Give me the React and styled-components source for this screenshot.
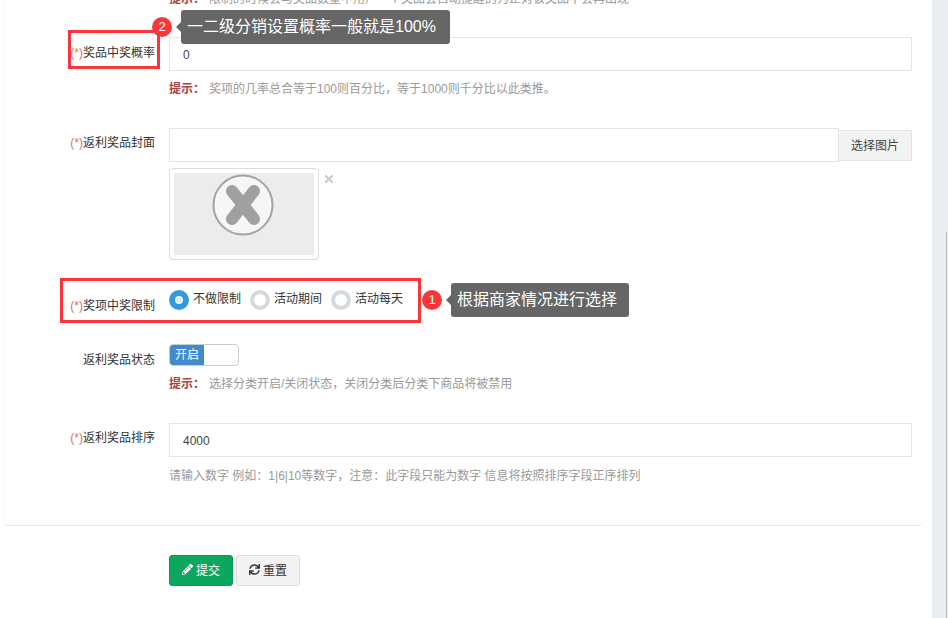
import React from "react";
import styled, { createGlobalStyle } from "styled-components";
import { FaPencilAlt, FaSync, FaTimes } from "react-icons/fa";

const GlobalStyle = createGlobalStyle`
    html, body {
        margin: 0;
        padding: 0;
        height: 618px;
        overflow: hidden;
        background: #ffffff;
        font-family: "Liberation Sans", "Noto Sans CJK SC", sans-serif;
        font-size: 12px;
        color: #333333;
    }
    * {
        box-sizing: border-box;
    }
`;

const App = () => {
    return (
        <>
            <GlobalStyle />
            <Page>
                <Main>
                    <Portlet>
                        <ClippedRow>
                            <Spacer />
                            <Hint>
                                <HintTitle>提示：</HintTitle>
                                限制的时候会与奖品数量中用户一个奖品会自动提醒的为止对该奖品不会再出现
                            </Hint>
                        </ClippedRow>

                        <Row $mb={29}>
                            <Label $pt={6}><Required>(*)</Required>奖品中奖概率</Label>
                            <Control>
                                <TextInput defaultValue="0" />
                                <Hint $mt={8}>
                                    <HintTitle>提示：</HintTitle>
                                    奖项的几率总合等于100则百分比，等于1000则千分比以此类推。
                                </Hint>
                            </Control>
                        </Row>

                        <Row $mb={23}>
                            <Label $pt={5}><Required>(*)</Required>返利奖品封面</Label>
                            <Control>
                                <InputGroup>
                                    <TextInput />
                                    <AddonButton>选择图片</AddonButton>
                                </InputGroup>
                                <ThumbRow>
                                    <Thumb>
                                        <ThumbImage>
                                            <svg width="64" height="62" viewBox="0 0 64 62">
                                                <circle cx="31" cy="31" r="29.5" fill="#f6f6f6" stroke="#a3a3a3" strokeWidth="2" />
                                                <path d="M20 17 L42 45 M42 17 L20 45" stroke="#a0a0a0" strokeWidth="12" strokeLinecap="round" />
                                            </svg>
                                        </ThumbImage>
                                    </Thumb>
                                    <RemoveIcon><FaTimes size={12} /></RemoveIcon>
                                </ThumbRow>
                            </Control>
                        </Row>

                        <Row $mb={27}>
                            <Label $pt={13}><Required>(*)</Required>奖项中奖限制</Label>
                            <RadioGroup>
                                <RadioItem>
                                    <RadioMark $checked />
                                    <RadioText>不做限制</RadioText>
                                </RadioItem>
                                <RadioItem>
                                    <RadioMark />
                                    <RadioText>活动期间</RadioText>
                                </RadioItem>
                                <RadioItem>
                                    <RadioMark />
                                    <RadioText>活动每天</RadioText>
                                </RadioItem>
                            </RadioGroup>
                        </Row>

                        <Row $mb={29}>
                            <Label $pt={6}>返利奖品状态</Label>
                            <Control>
                                <Switch>
                                    <SwitchOn>开启</SwitchOn>
                                </Switch>
                                <Hint $mt={8}>
                                    <HintTitle>提示：</HintTitle>
                                    选择分类开启/关闭状态，关闭分类后分类下商品将被禁用
                                </Hint>
                            </Control>
                        </Row>

                        <Row $mb={39}>
                            <Label $pt={5}><Required>(*)</Required>返利奖品排序</Label>
                            <Control>
                                <TextInput defaultValue="4000" />
                                <Hint $mt={9}>请输入数字 例如：1|6|10等数字，注意：此字段只能为数字 信息将按照排序字段正序排列</Hint>
                            </Control>
                        </Row>
                    </Portlet>

                    <Actions>
                        <SubmitButton><FaPencilAlt size={11} />提交</SubmitButton>
                        <ResetButton><FaSync size={11} />重置</ResetButton>
                    </Actions>
                </Main>
                <Rail>
                    <RailThumb />
                </Rail>

                <RedBox $left={68} $top={30} $width={92} $height={39} />
                <Badge $left={152} $top={17}>2</Badge>
                <Callout $left={181} $top={10} $width={269}>一二级分销设置概率一般就是100%</Callout>

                <RedBox $left={60} $top={278} $width={361} $height={45} />
                <Badge $left={422} $top={290}>1</Badge>
                <Callout $left={451} $top={283} $width={178}>根据商家情况进行选择</Callout>
            </Page>
        </>
    );
};

export default App;

const Page = styled.div`
    position: relative;
    display: flex;
    width: 948px;
    height: 618px;
    overflow: hidden;
`;
const Main = styled.div`
    flex: 1;
    padding-left: 4px;
`;
const Rail = styled.div`
    display: flex;
    justify-content: flex-end;
    align-items: flex-end;
    width: 16px;
    background-color: #eaedf2;
`;
const RailThumb = styled.div`
    width: 1px;
    margin-right: 1px;
    height: 386px;
    background-color: #b9bbbf;
`;
const Portlet = styled.div`
    width: 918px;
    height: 526px;
    padding-right: 10px;
    border-left: 1px solid #f8f8f8;
    border-bottom: 1px solid #e6e6e6;
    border-bottom-left-radius: 4px;
    border-bottom-right-radius: 4px;
    overflow: hidden;
`;
const Row = styled.div`
    display: flex;
    gap: 14px;
    margin-bottom: ${(props) => props.$mb || 0}px;
`;
const ClippedRow = styled(Row)`
    height: 20px;
    margin-top: -11px;
    margin-bottom: 28px;
`;
const Spacer = styled.div`
    width: 150px;
    flex-shrink: 0;
`;
const Label = styled.label`
    width: 150px;
    flex-shrink: 0;
    padding-top: ${(props) => props.$pt || 0}px;
    line-height: 20px;
    text-align: right;
    color: #333333;
`;
const Required = styled.span`
    color: #d0775c;
`;
const Control = styled.div`
    flex: 1;
    min-width: 0;
`;
const TextInput = styled.input`
    display: block;
    width: 100%;
    height: 34px;
    padding: 2px 13px 0;
    border: 1px solid #e5e5e5;
    outline: none;
    font: inherit;
    color: #444444;
    background: #ffffff;
`;
const Hint = styled.div`
    margin-top: ${(props) => props.$mt || 0}px;
    line-height: 20px;
    color: #999999;
`;
const HintTitle = styled.strong`
    margin-right: 4px;
    color: #a94442;
`;
const InputGroup = styled.div`
    display: flex;
    align-items: center;
`;
const AddonButton = styled.button`
    flex-shrink: 0;
    width: 73px;
    height: 31px;
    padding: 0 0 2px;
    border: 1px solid #e5e5e5;
    border-left: none;
    background-color: #f3f3f3;
    font: inherit;
    color: #444444;
`;
const ThumbRow = styled.div`
    display: flex;
    align-items: flex-start;
    margin-top: 6px;
`;
const Thumb = styled.div`
    width: 150px;
    height: 92px;
    padding: 4px;
    border: 1px solid #dddddd;
    border-radius: 4px;
    background: #ffffff;
`;
const ThumbImage = styled.div`
    display: flex;
    justify-content: center;
    align-items: center;
    height: 82px;
    background-color: #ececec;
    svg {
        margin-top: -18px;
    }
`;
const RemoveIcon = styled.span`
    display: flex;
    margin: 5px 0 0 4px;
    color: #cccccc;
`;
const RadioGroup = styled.div`
    display: flex;
    align-items: center;
    gap: 9px;
    height: 34px;
`;
const RadioItem = styled.label`
    display: flex;
    align-items: center;
    gap: 4px;
    color: #333333;
`;
const RadioText = styled.span`
    line-height: 16px;
    margin-bottom: 3px;
`;
const RadioMark = styled.span`
    width: 20px;
    height: 20px;
    border-radius: 50%;
    border: ${(props) => (props.$checked ? "6px solid #3598dc" : "4px solid #d5dadd")};
    background: ${(props) => (props.$checked ? "#d9e8f5" : "#ffffff")};
    box-shadow: ${(props) => (props.$checked ? "inset 0 0 0 1px #ffffff" : "none")};
`;
const Switch = styled.div`
    width: 70px;
    height: 22px;
    border: 1px solid #cccccc;
    border-radius: 4px;
    overflow: hidden;
    background: #ffffff;
`;
const SwitchOn = styled.div`
    width: 34px;
    height: 100%;
    line-height: 20px;
    text-align: center;
    color: #ffffff;
    background-color: #428bca;
`;
const Actions = styled.div`
    display: flex;
    gap: 3px;
    margin-top: 29px;
    padding-left: 165px;
`;
const SubmitButton = styled.button`
    display: flex;
    justify-content: center;
    align-items: center;
    gap: 3px;
    width: 64px;
    height: 31px;
    padding: 0 0 2px;
    border: 1px solid #0a9c56;
    border-radius: 3px;
    background-color: #0ba75c;
    color: #ffffff;
    font: inherit;
`;
const ResetButton = styled(SubmitButton)`
    border-color: #dddddd;
    background-color: #f3f3f3;
    color: #333333;
`;
const RedBox = styled.div`
    position: absolute;
    left: ${(props) => props.$left}px;
    top: ${(props) => props.$top}px;
    width: ${(props) => props.$width}px;
    height: ${(props) => props.$height}px;
    border: 3px solid #f9373a;
    pointer-events: none;
`;
const Badge = styled.div`
    position: absolute;
    left: ${(props) => props.$left}px;
    top: ${(props) => props.$top}px;
    width: 20px;
    height: 20px;
    border-radius: 50%;
    background-color: #f9373a;
    color: #ffffff;
    font-size: 13px;
    line-height: 20px;
    text-align: center;
`;
const Callout = styled.div`
    position: absolute;
    left: ${(props) => props.$left}px;
    top: ${(props) => props.$top}px;
    width: ${(props) => props.$width}px;
    height: 34px;
    padding-left: 6px;
    border-radius: 3px;
    background-color: #666666;
    color: #ffffff;
    font-size: 16px;
    line-height: 34px;
    white-space: nowrap;
    &::before {
        content: "";
        position: absolute;
        left: -5px;
        top: 12px;
        border-style: solid;
        border-width: 5px 5px 5px 0;
        border-color: transparent #666666 transparent transparent;
    }
`;
